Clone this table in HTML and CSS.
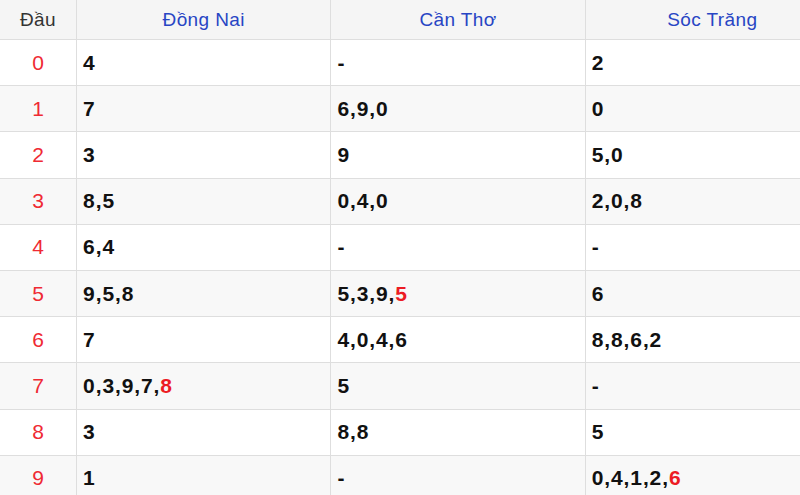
FILE: index.html
```html
<!DOCTYPE html>
<html lang="vi">
<head>
<meta charset="utf-8">
<title>Lô tô đầu</title>
<link rel="stylesheet" href="styles.css">
</head>
<body>
<table class="loto">
  <colgroup>
    <col class="c-head">
    <col class="c-prov">
    <col class="c-prov">
    <col class="c-prov">
  </colgroup>
  <thead>
    <tr>
      <th class="dau">Đầu</th>
      <th class="prov">Đồng Nai</th>
      <th class="prov">Cần Thơ</th>
      <th class="prov">Sóc Trăng</th>
    </tr>
  </thead>
  <tbody>
    <tr><td class="num">0</td><td class="val">4</td><td class="val">-</td><td class="val">2</td></tr>
    <tr><td class="num">1</td><td class="val">7</td><td class="val">6,9,0</td><td class="val">0</td></tr>
    <tr><td class="num">2</td><td class="val">3</td><td class="val">9</td><td class="val">5,0</td></tr>
    <tr><td class="num">3</td><td class="val">8,5</td><td class="val">0,4,0</td><td class="val">2,0,8</td></tr>
    <tr><td class="num">4</td><td class="val">6,4</td><td class="val">-</td><td class="val">-</td></tr>
    <tr><td class="num">5</td><td class="val">9,5,8</td><td class="val">5,3,9,<span class="hot">5</span></td><td class="val">6</td></tr>
    <tr><td class="num">6</td><td class="val">7</td><td class="val">4,0,4,6</td><td class="val">8,8,6,2</td></tr>
    <tr><td class="num">7</td><td class="val">0,3,9,7,<span class="hot">8</span></td><td class="val">5</td><td class="val">-</td></tr>
    <tr><td class="num">8</td><td class="val">3</td><td class="val">8,8</td><td class="val">5</td></tr>
    <tr><td class="num">9</td><td class="val">1</td><td class="val">-</td><td class="val">0,4,1,2,<span class="hot">6</span></td></tr>
  </tbody>
</table>
</body>
</html>
```

FILE: styles.css
```css
html, body {
  margin: 0;
  padding: 0;
  background: #ffffff;
  overflow: hidden;
}

body {
  width: 800px;
  height: 495px;
  font-family: "Liberation Sans", Arial, sans-serif;
}

.loto {
  width: 840px;
  table-layout: fixed;
  border-collapse: separate;
  border-spacing: 0;
}

.c-head { width: 77px; }
.c-prov { width: 254px; }

.loto th,
.loto td {
  border-right: 1px solid #dedede;
  border-bottom: 1px solid #dedede;
  padding: 0;
  vertical-align: middle;
}

.loto thead tr {
  background: #f5f5f5;
}

.loto th {
  height: 39px;
  font-weight: normal;
  font-size: 19px;
  letter-spacing: 0.4px;
  text-align: center;
}

.dau {
  color: #333333;
}

.prov {
  color: #2845c4;
}

.loto td {
  height: 45.2px;
}

.loto tbody tr:nth-child(even) {
  background: #f8f8f8;
}

.num {
  text-align: center;
  color: #ef2a33;
  font-size: 21px;
}

.val {
  padding-left: 6px !important;
  color: #111111;
  font-weight: bold;
  font-size: 21px;
  letter-spacing: 0.9px;
}

.hot {
  color: #ec1c24;
}
```
